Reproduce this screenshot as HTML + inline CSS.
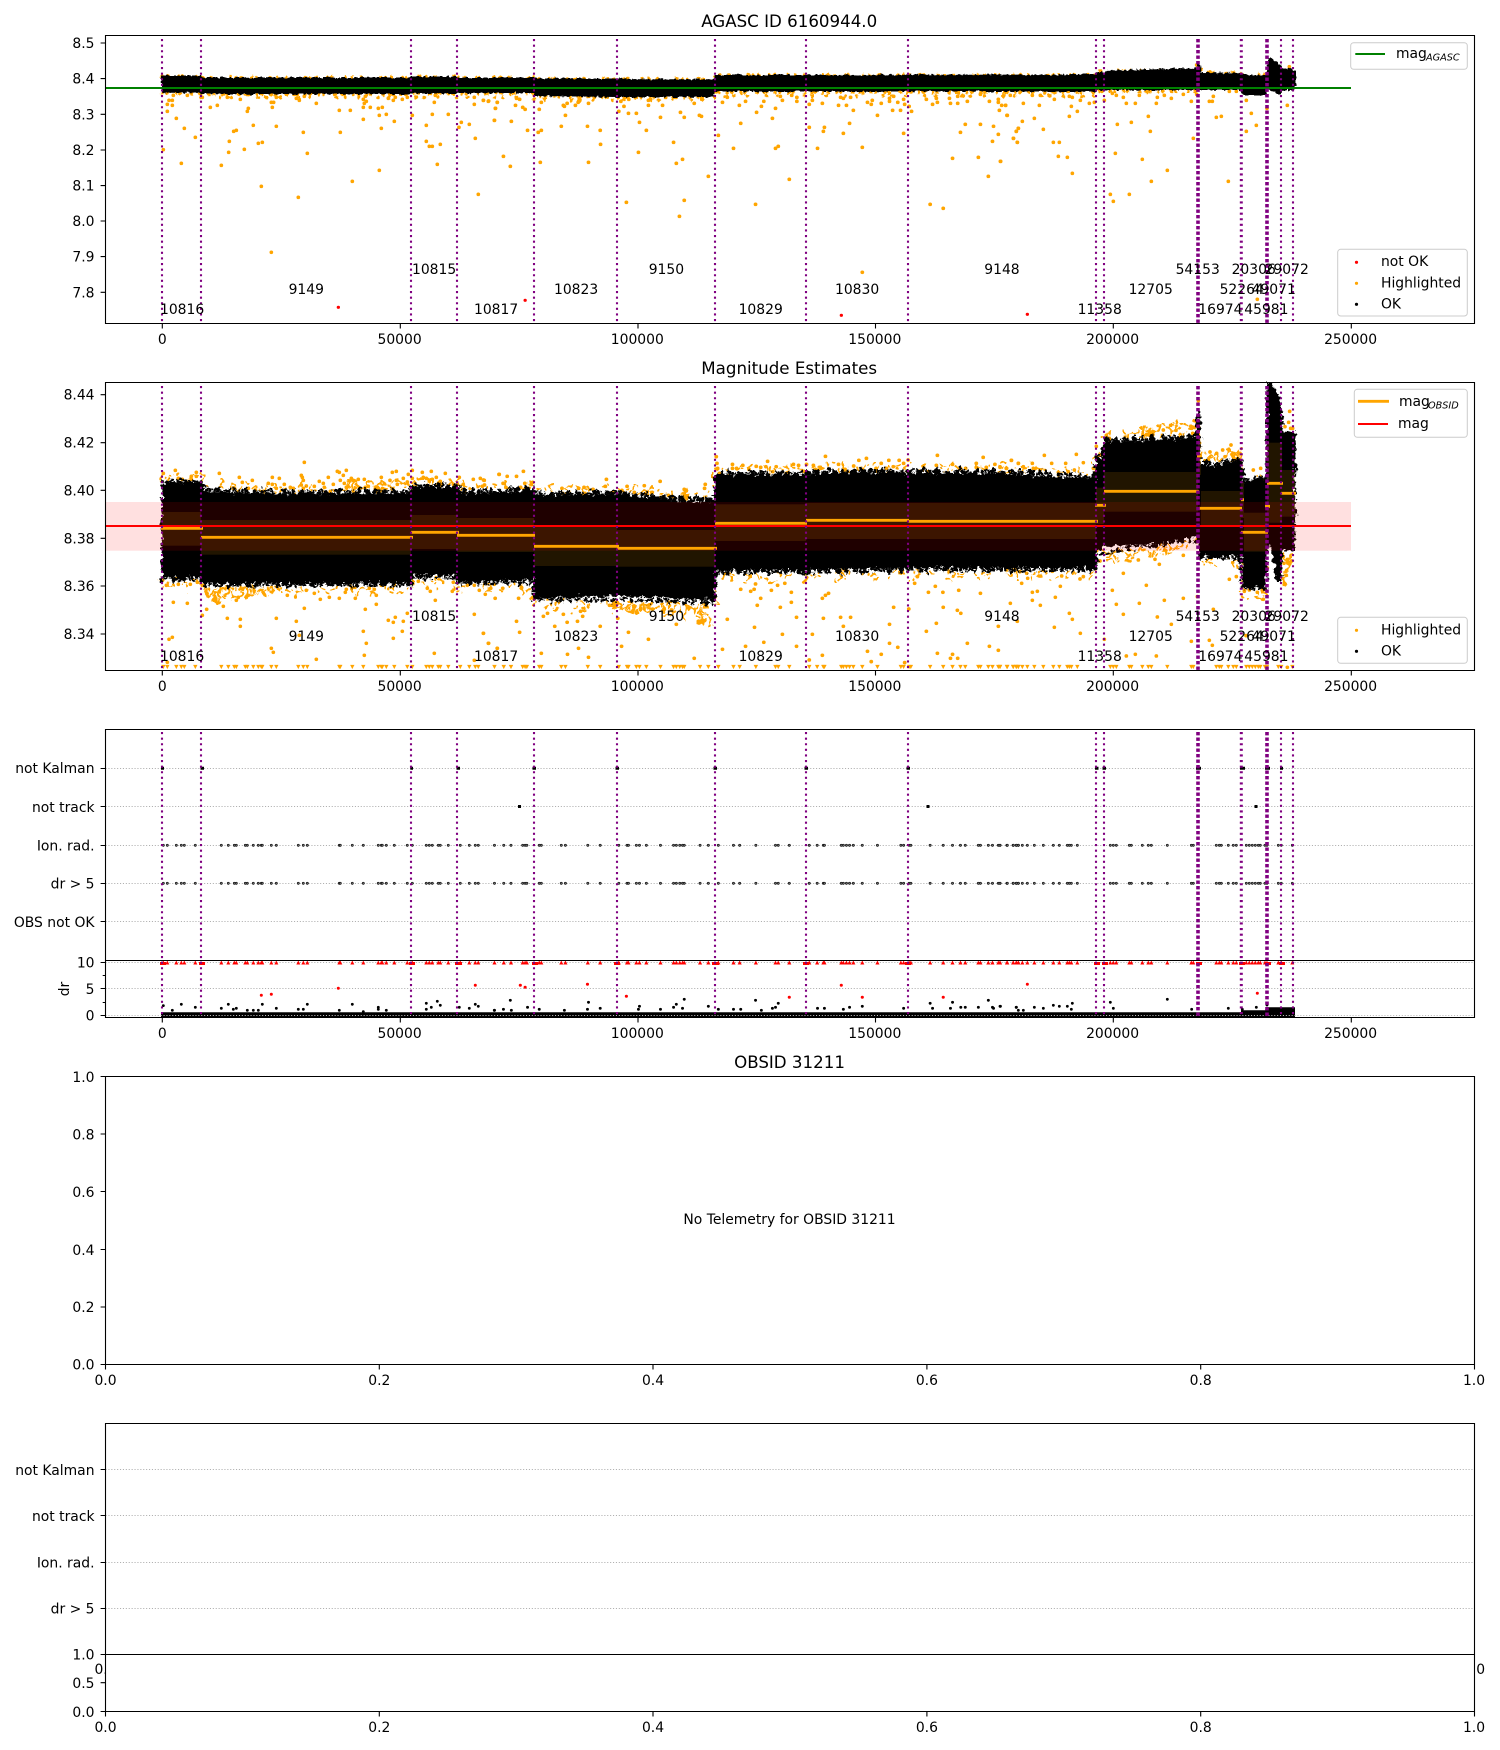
<!DOCTYPE html>
<html><head><meta charset="utf-8"><title>AGASC ID 6160944.0</title>
<style>
html,body{margin:0;padding:0;background:#fff}
svg{display:block}
text{font-family:"DejaVu Sans","Liberation Sans",sans-serif;font-size:13.9px;fill:#000}
.r{text-anchor:end}.m{text-anchor:middle}.t{font-size:16.67px;text-anchor:middle}
.s{font-size:9.7px;font-style:italic}
.o{fill:none;stroke:#ffa500;stroke-width:11;stroke-linecap:round}
.od{fill:none;stroke:#ffa500;stroke-width:3.4;stroke-linecap:round}
.k{fill:none;stroke:#000;stroke-width:3.5;stroke-linecap:round}
.kk{fill:none;stroke:#000;stroke-width:8.5;stroke-linecap:round}
.rd{fill:none;stroke:#f00;stroke-width:9;stroke-linecap:round}
.v{stroke:#800080;stroke-width:2.1;stroke-dasharray:2.1 3.5;fill:none}
.vb{stroke:#800080;stroke-width:3.6;stroke-dasharray:3.4 2.1;fill:none}
.g{stroke:#b0b0b0;stroke-width:1;stroke-dasharray:1.1 1.8;fill:none}
.a{stroke:#000;stroke-width:1.1;fill:none}
.lg{fill:#fff;fill-opacity:.8;stroke:#ccc;stroke-width:1}
.b{fill:#ffa500;fill-opacity:.13}
.ml{stroke:#ffa500;stroke-width:2.8;fill:none}
</style></head><body>
<svg width="1500" height="1750" viewBox="0 0 1500 1750" xmlns="http://www.w3.org/2000/svg">
<defs>
<filter id="j1" filterUnits="userSpaceOnUse" x="100" y="30" width="1300" height="120" color-interpolation-filters="sRGB"><feTurbulence type="fractalNoise" baseFrequency=".3" numOctaves="2" seed="3" result="n"/><feDisplacementMap in="SourceGraphic" in2="n" scale="4" xChannelSelector="R" yChannelSelector="G"/></filter>
<filter id="j2" filterUnits="userSpaceOnUse" x="100" y="375" width="1300" height="300" color-interpolation-filters="sRGB"><feTurbulence type="fractalNoise" baseFrequency=".22" numOctaves="3" seed="7" result="n"/><feDisplacementMap in="SourceGraphic" in2="n" scale="9" xChannelSelector="R" yChannelSelector="G"/></filter>
<filter id="j3" filterUnits="userSpaceOnUse" x="100" y="375" width="1300" height="300" color-interpolation-filters="sRGB"><feTurbulence type="fractalNoise" baseFrequency=".12" numOctaves="2" seed="11" result="n"/><feDisplacementMap in="SourceGraphic" in2="n" scale="16" xChannelSelector="R" yChannelSelector="G"/></filter>
<marker id="mt" markerUnits="userSpaceOnUse" markerWidth="20" markerHeight="20" refX="10" refY="10" viewBox="0 0 20 20"><path d="M3.500 3.500h13l-6.500 13z" fill="#ffa500"/></marker>
<marker id="mu" markerUnits="userSpaceOnUse" markerWidth="20" markerHeight="20" refX="10" refY="10" viewBox="0 0 20 20"><path d="M10 4l6 12h-12z" fill="#f00"/></marker>
<marker id="md" markerUnits="userSpaceOnUse" markerWidth="20" markerHeight="20" refX="10" refY="10" viewBox="0 0 20 20"><circle cx="10" cy="10" r="3.200" fill="#777" stroke="#111" stroke-width="2"/></marker>
<g id="xs" fill="none" stroke="none">
<path transform="scale(.3333)" d="M490 0 502 0 529 0 544 0 553 0 586 0 664 0 685 0 703 0 709 0 736 0 742 0 760 0 775 0 784 0 787 0 814 0 829 0 895 0 910 0 922 0 1018 0 1021 0 1057 0 1090 0 1135 0 1144 0 1147 0 1159 0 1183 0 1222 0 1237 0 1279 0 1288 0 1297 0 1315 0 1321 0 1345 0 1381 0 1408 0 1426 0 1435 0"/>
<path transform="translate(480,0) scale(.3444,.3333)" d="M42 0 69 0 90 0 124 0 131 0 136 0 172 0 178 0 236 0 248 0 313 0 349 0 403 0 427 0 431 0 454 0 463 0 483 0 524 0 562 0 570 0 580 0 588 0 593 0 639 0 663 0 692 0 736 0 754 0 801 0 858 0 866 0 898 0 956 0 979 0 997 0 1000 0 1049 0 1055 0 1064 0 1073 0 1084 0 1110 0 1154 0 1222 0 1230 0 1246 0 1251 0 1307 0 1345 0 1372 0 1395 0 1409 0 1447 0 1453 0 1476 0 1488 0 1505 0 1510 0 1530 0 1548 0 1557 0 1563 0"/>
<path transform="translate(1000,0) scale(.3333)" d="M0 0 22 0 40 0 49 0 55 0 67 0 82 0 103 0 130 0 160 0 178 0 202 0 208 0 214 0 232 0 331 0 340 0 349 0 388 0 394 0 427 0 445 0 454 0 502 0 574 0 580 0 649 0 658 0 664 0 685 0 700 0 709 0 739 0 748 0 757 0 766 0 775 0 781 0 795 0 801 0 835 0 844 0 877 0"/>
</g>
<path id="p2t" d="M162 483L201 482 204 492H220L300 494 411 492 413 487H457L460 494 534 490 536 495 617 494 700 502 715 500 716 475H806L820 473H1000L1096 478V458H1104V442L1150 440 1195 438 1198 425 1200 465H1215L1241 461 1243 482 1266 480"/>
<path id="p2b" d="M162 577H201V583H411V575H457V581H534V598H617L714 600 716 570H806L908 568H1096V553H1104L1130 545 1160 543 1197 536 1201 556H1241L1243 587H1267"/>
</defs>

<!-- PANEL 1 -->
<text class="t" x="789.200" y="27">AGASC ID 6160944.0</text>
<g filter="url(#j1)">
<g class="od" stroke-dasharray="0 6 0 11 0 4 0 14 0 7 0 9 0 19 0 5"><path d="M162 76H201V77.500H411V76.500H457V77.500H534V78.500H617V79H715V75H1096V71H1198V68H1201V73H1241V75H1267"/></g>
<g class="od" stroke-dasharray="0 5 0 9 0 4 0 12 0 7 0 3 0 8"><path d="M162 93.500H201V94.500H411V93.500H457V93.500H534V97H617V97.500H715V92.500H1096V91.500H1198"/></g>
<g class="od" stroke-dasharray="0 19 0 11 0 27 0 8 0 14"><path d="M201 97.500H534V100H715V96H1096V95"/></g>
</g>
<g class="o" transform="scale(.3333)"><path d="M490 449h.1M502 334h.1M502 313h.1M507 301h.1M517 301h.1M517 316h.1M520 286h.1M529 355h.1M553 385h.1M544 490h.1M586 412h.1M562 286h.1M607 292h.1M631 322h.1M652 316h.1M664 496h.1M682 292h.1M686 457h.1M688 424h.1M701 394h.1M709 391h.1M721 298h.1M733 448h.1M742 334h.1M745 325h.1M760 376h.1M775 430h.1M787 427h.1M784 559h.1M814 307h.1M821 307h.1M817 322h.1M829 292h.1M829 379h.1M814 757h.1M889 295h.1M898 301h.1M895 592h.1M910 397h.1M913 289h.1M922 460h.1M949 310h.1M1018 331h.1M1021 397h.1M1051 331h.1M1057 544h.1M1090 298h.1M1093 310h.1M1099 304h.1M1096 289h.1M1090 322h.1M1111 322h.1M1090 358h.1M1135 325h.1M1147 322h.1M1138 346h.1M1159 343h.1M1144 385h.1M1138 511h.1M1165 295h.1M1180 301h.1M1186 292h.1M1183 364h.1M1207 298h.1M1222 292h.1M1237 346h.1M1279 376h.1M1279 424h.1M1288 439h.1M1297 439h.1M1297 343h.1M1303 307h.1M1306 286h.1M1321 433h.1M1312 493h.1M1345 343h.1M1377 382h.1M1384 367h.1M1408 373h.1M1423 292h.1M1423 313h.1M1426 415h.1M1435 583h.1M1450 301h.1M1465 304h.1M1486 325h.1M1492 307h.1M1483 361h.1"/></g>
<g class="o" transform="translate(480,20) scale(.3444,.3333)"><path d="M10 241h.1M25 243h.1M50 247h.1M45 265h.1M42 301h.1M68 409h.1M88 439h.1M91 304h.1M103 256h.1M106 235h.1M115 238h.1M124 262h.1M131 268h.1M138 331h.1M169 337h.1M178 331h.1M175 427h.1M172 268h.1M178 247h.1M248 286h.1M242 256h.1M245 259h.1M253 250h.1M236 319h.1M277 256h.1M285 247h.1M315 250h.1M312 319h.1M315 427h.1M349 331h.1M350 373h.1M409 244h.1M403 274h.1M418 259h.1M431 280h.1M432 238h.1M454 280h.1M463 307h.1M483 331h.1M460 397h.1M425 547h.1M489 241h.1M489 256h.1M524 292h.1M530 256h.1M562 367h.1M570 430h.1M588 418h.1M582 277h.1M593 292h.1M593 541h.1M579 589h.1M622 250h.1M637 286h.1M643 289h.1M663 469h.1M692 346h.1M704 247h.1M718 232h.1M736 385h.1M757 310h.1M753 256h.1M771 244h.1M800 553h.1M803 277h.1M817 259h.1M824 244h.1M849 295h.1M858 265h.1M858 385h.1M866 379h.1M872 229h.1M878 241h.1M898 478h.1M905 226h.1M920 244h.1M920 232h.1M956 322h.1M956 253h.1M965 241h.1M980 385h.1M994 250h.1M997 334h.1M1000 322h.1M1041 256h.1M1047 232h.1M1055 235h.1M1055 340h.1M1064 256h.1M1073 310h.1M1076 232h.1M1084 271h.1M1110 382h.1M1110 757h.1M1125 247h.1M1136 253h.1M1139 241h.1M1154 286h.1M1165 250h.1M1189 235h.1M1189 244h.1M1198 271h.1M1201 229h.1M1213 247h.1M1221 271h.1M1230 238h.1M1230 340h.1M1233 253h.1M1246 259h.1M1253 274h.1M1296 238h.1M1314 253h.1M1325 235h.1M1328 247h.1M1366 250h.1M1363 235h.1M1387 229h.1M1387 250h.1M1395 337h.1M1409 313h.1M1415 244h.1M1372 415h.1M1307 553h.1M1345 565h.1M1453 313h.1M1453 223h.1M1447 412h.1M1476 469h.1M1479 244h.1M1488 364h.1M1491 319h.1M1505 238h.1M1505 247h.1M1505 343h.1M1508 271h.1M1511 424h.1M1526 256h.1M1530 286h.1M1549 355h.1M1557 334h.1M1563 325h.1M1560 367h.1"/></g>
<g class="o" transform="translate(1000,0) scale(.3333)"><path d="M5 316h.1M17 316h.1M22 346h.1M31 286h.1M40 415h.1M49 394h.1M55 385h.1M52 427h.1M67 364h.1M70 310h.1M2 484h.1M97 286h.1M103 355h.1M118 316h.1M121 286h.1M130 388h.1M160 427h.1M163 298h.1M178 427h.1M175 469h.1M202 472h.1M217 520h.1M208 349h.1M214 319h.1M208 289h.1M217 292h.1M232 334h.1M241 301h.1M268 310h.1M283 307h.1M313 301h.1M337 280h.1M349 286h.1M370 292h.1M379 310h.1M406 310h.1M418 286h.1M331 583h.1M340 604h.1M388 583h.1M346 460h.1M352 373h.1M394 367h.1M427 478h.1M445 349h.1M451 394h.1M454 544h.1M469 310h.1M472 292h.1M493 286h.1M502 511h.1M514 295h.1M550 283h.1M574 304h.1M580 415h.1M590 283h.1M628 304h.1M637 304h.1M640 289h.1M649 352h.1M664 349h.1M685 544h.1M739 301h.1M739 394h.1M754 340h.1M769 376h.1M772 898h.1M801 325h.1M862 316h.1M688 274h.1M709 274h.1M868 200h.1M630 216h.1M590 195h.1"/></g>
<path filter="url(#j1)" fill="#000" d="M161 75.500L201 75.500V77.500H411V76.500H457V77.500H534V78.500H617L640 79.300H715V75H806L1096 74.500V72H1104V70.500L1198 68.300V64L1200 64 1201 72.500 1241 73 1243 75 1266 75 1269 57.500 1275 60 1281 65.500 1283 69 1290 68 1296 72 1296 84 1294 90H1283L1281 94H1277L1271 90H1267V95H1243L1241 90H1096V91.500H1035L715 91.500 714 97H617L534 96V93H457V93.500H411V94H201V92.700H161z"/>
<path d="M105.500 88H1351" stroke="#008000" stroke-width="2.100" fill="none"/>
<path d="M338.300 307.300h.1M525.100 300.300h.1M841.300 315.300h.1M1027.300 314.300h.1" stroke="#f00" stroke-width="3.200" stroke-linecap="round" fill="none"/>
<g class="v"><path d="M162 39V323M201 39V323M411 39V323M457 39V323M534 39V323M617 39V323M715 39V323M806 39V323M908 39V323M1096 39V323M1104 39V323M1281 39V323M1293 39V323"/></g>
<g class="vb"><path d="M1198 39V323M1267 39V323"/></g><path d="M1241.300 39V323" class="v" style="stroke-width:3"/>
<g>
<text x="160" y="314">10816</text><text x="474" y="314">10817</text><text x="738.600" y="314">10829</text><text x="1077.600" y="314">11358</text><text x="1198.300" y="314">16974</text><text x="1244.300" y="314">45981</text>
<text x="288.600" y="294">9149</text><text x="554" y="294">10823</text><text x="835" y="294">10830</text><text x="1128.600" y="294">12705</text><text x="1219.600" y="294">52264</text><text x="1251.600" y="294">49071</text>
<text x="412" y="274">10815</text><text x="648.700" y="274">9150</text><text x="984.300" y="274">9148</text><text x="1175.600" y="274">54153</text><text x="1231.600" y="274">20306</text><text x="1264.600" y="274">29072</text>
</g>
<path class="a" d="M105.500 35.500H1474.500V323.500H105.500ZM100.600 43H105.500M100.600 78.600H105.500M100.600 114.300H105.500M100.600 150H105.500M100.600 185.600H105.500M100.600 221H105.500M100.600 256.600H105.500M100.600 292.300H105.500M162.300 323.500V328.500M400.300 323.500V328.500M638 323.500V328.500M875.500 323.500V328.500M1113.300 323.500V328.500M1351.300 323.500V328.500"/>
<text class="r" x="94.500" y="48">8.5</text><text class="r" x="94.500" y="83.600">8.4</text><text class="r" x="94.500" y="119.300">8.3</text><text class="r" x="94.500" y="155">8.2</text><text class="r" x="94.500" y="190.600">8.1</text><text class="r" x="94.500" y="226">8.0</text><text class="r" x="94.500" y="261.600">7.9</text><text class="r" x="94.500" y="297.300">7.8</text>
<text class="m" x="162.300" y="344">0</text><text class="m" x="399.600" y="344">50000</text><text class="m" x="637.300" y="344">100000</text><text class="m" x="874.800" y="344">150000</text><text class="m" x="1112.600" y="344">200000</text><text class="m" x="1350.600" y="344">250000</text>
<rect class="lg" x="1350.700" y="42.700" width="116.600" height="26.600" rx="3"/>
<path d="M1355.300 54H1385" stroke="#008000" stroke-width="2.100"/>
<text x="1396" y="58">mag</text><text class="s" x="1426" y="60.500">AGASC</text>
<rect class="lg" x="1337.700" y="249.300" width="129.600" height="66.700" rx="3"/>
<circle cx="1356.500" cy="262.300" r="1.600" fill="#f00"/><text x="1381" y="266">not OK</text>
<circle cx="1356.500" cy="283.300" r="1.600" fill="#ffa500"/><text x="1381" y="287.700">Highlighted</text>
<circle cx="1356.500" cy="304.300" r="1.600" fill="#000"/><text x="1381" y="308.500">OK</text>

<!-- PANEL 2 -->
<text class="t" x="789.200" y="374">Magnitude Estimates</text>
<g class="od" filter="url(#j3)"><use href="#p2t" y="-4" stroke-dasharray="0 7 0 13 0 4 0 17 0 8 0 11"/><use href="#p2t" y="-8" stroke-dasharray="0 15 0 19 0 7 0 27 0 11"/><use href="#p2b" y="5" stroke-dasharray="0 6 0 4 0 14 0 8 0 5 0 20"/><use href="#p2b" y="10" stroke-dasharray="0 19 0 8 0 33 0 12"/>
<path stroke-dasharray="0 3 0 4 0 2 0 5" d="M204 586 208 596 212 588 216 602 220 589 225 598 230 587 236 600 242 588 248 597 255 587 262 595 270 587 280 593M616 603 622 612 628 603 636 614 644 604 652 611 660 603 668 615 676 604 684 618 692 605 700 624 706 606 712 628M1104 551 1112 558 1120 549 1130 560 1140 548 1150 556 1160 546 1170 553 1180 544M1209 462 1215 452 1222 460 1228 450 1234 458 1241 448M1283 554 1287 566 1291 556 1285 575 1284 585"/>
<path stroke-dasharray="0 4 0 3 0 6 0 2" d="M345 489 352 481 360 488 368 482 376 489 384 480 392 488 400 479 408 487M1130 436 1140 428 1150 435 1160 424 1170 432 1180 421 1190 428 1197 418"/></g>
<g class="o" transform="translate(0,350) scale(.3333)"><path d="M490 370h.1M526 361h.1M535 385h.1M547 388h.1M574 388h.1M574 379h.1M589 367h.1M589 379h.1M658 370h.1M718 382h.1M727 397h.1M757 391h.1M745 415h.1M766 420h.1M790 424h.1M805 400h.1M817 382h.1M817 403h.1M838 385h.1M829 415h.1M853 403h.1M871 412h.1M880 415h.1M904 376h.1M907 382h.1M913 337h.1M910 391h.1M904 405h.1M910 415h.1M919 408h.1M943 409h.1M958 394h.1M970 400h.1M973 412h.1M985 382h.1M991 424h.1M1000 403h.1M1012 364h.1M1018 367h.1M1021 391h.1M1030 376h.1M1039 361h.1M1033 400h.1M1039 412h.1M1054 385h.1M1060 391h.1M1075 388h.1M1093 388h.1M1096 412h.1M1105 409h.1M1144 382h.1M1135 415h.1M1170 391h.1M1177 367h.1M1189 364h.1M1189 391h.1M1192 403h.1M1210 385h.1M1225 373h.1M1222 396h.1M1237 361h.1M1237 385h.1M1267 367h.1M1270 382h.1M1279 385h.1M1294 364h.1M1297 388h.1M1309 382h.1M1336 370h.1M1321 394h.1M1360 403h.1M1378 382h.1M1390 403h.1M1420 388h.1M1441 385h.1M1453 391h.1M1447 409h.1M1498 373h.1M499 706h.1M529 685h.1M535 703h.1M571 703h.1M592 697h.1M607 706h.1M620 778h.1M607 796h.1M520 757h.1M562 760h.1M507 868h.1M517 862h.1M502 937h.1M670 769h.1M682 805h.1M709 751h.1M715 742h.1M721 808h.1M721 829h.1M745 736h.1M829 805h.1M814 895h.1M820 907h.1M889 814h.1M898 856h.1M913 775h.1M949 928h.1M862 736h.1M919 721h.1M943 730h.1M961 748h.1M988 742h.1M1018 745h.1M1036 727h.1M1039 718h.1M1066 745h.1M1096 778h.1M1099 880h.1M1090 844h.1M1093 916h.1M1108 715h.1M1123 718h.1M1129 736h.1M1129 763h.1M1144 706h.1M1165 811h.1M1180 817h.1M1186 802h.1M1207 844h.1M1180 865h.1M1222 790h.1M1210 814h.1M1237 697h.1M1255 694h.1M1282 715h.1M1291 724h.1M1306 751h.1M1303 910h.1M1357 724h.1M1360 697h.1M1423 793h.1M1450 850h.1M1465 880h.1M1492 895h.1M1423 931h.1M1402 706h.1M1423 706h.1M1438 721h.1M1456 733h.1M1483 703h.1"/></g>
<g class="o" transform="translate(480,360) scale(.3444,.3333)"><path d="M10 360h.1M13 375h.1M55 343h.1M79 349h.1M106 349h.1M126 334h.1M153 367h.1M130 370h.1M118 382h.1M67 370h.1M75 382h.1M208 404h.1M238 385h.1M240 400h.1M286 385h.1M302 382h.1M328 388h.1M305 400h.1M367 358h.1M364 379h.1M385 397h.1M412 391h.1M427 379h.1M448 397h.1M477 377h.1M481 400h.1M500 397h.1M523 364h.1M525 412h.1M547 406h.1M593 388h.1M600 412h.1M654 373h.1M652 385h.1M686 290h.1M688 310h.1M690 325h.1M695 340h.1M733 313h.1M733 325h.1M745 325h.1M763 316h.1M781 328h.1M802 319h.1M815 322h.1M830 320h.1M835 304h.1M850 335h.1M860 320h.1M895 340h.1M910 313h.1M925 316h.1M940 334h.1M948 313h.1M968 316h.1M988 322h.1M1003 289h.1M1041 313h.1M1060 328h.1M1085 318h.1M1100 301h.1M1122 295h.1M1110 328h.1M1150 325h.1M1165 310h.1M1187 301h.1M1180 325h.1M1200 320h.1M1217 301h.1M1230 310h.1M1243 300h.1M1275 335h.1M1300 335h.1M1325 316h.1M1328 286h.1M1372 313h.1M1395 325h.1M1410 325h.1M1441 310h.1M1441 322h.1M1461 292h.1M1470 322h.1M1495 313h.1M1510 322h.1M1528 325h.1M1543 301h.1M1563 310h.1M10 820h.1M25 850h.1M50 865h.1M31 685h.1M44 715h.1M66 685h.1M112 715h.1M115 817h.1M106 784h.1M178 880h.1M184 769h.1M196 760h.1M217 799h.1M242 763h.1M253 787h.1M254 883h.1M286 865h.1M283 784h.1M298 769h.1M292 754h.1M349 799h.1M315 892h.1M376 736h.1M400 775h.1M431 817h.1M411 859h.1M489 838h.1M570 793h.1M622 895h.1M634 784h.1M704 868h.1M718 778h.1M757 688h.1M771 859h.1M786 694h.1M796 688h.1M800 672h.1M815 715h.1M805 736h.1M797 802h.1M824 847h.1M846 691h.1M864 676h.1M885 670h.1M872 742h.1M878 823h.1M904 697h.1M904 727h.1M919 772h.1M919 859h.1M956 900h.1M965 823h.1M994 715h.1M1003 706h.1M1012 700h.1M994 886h.1M997 775h.1M1047 772h.1M1076 772h.1M1055 799h.1M1125 874h.1M1136 905h.1M1165 883h.1M1189 793h.1M1189 850h.1M1201 742h.1M1213 862h.1M1245 747h.1M1233 908h.1M1262 670h.1M1270 650h.1M1302 697h.1M1325 790h.1M1322 679h.1M1296 814h.1M1328 880h.1M1344 697h.1M1345 742h.1M1372 883h.1M1366 895h.1M1387 895h.1M1390 691h.1M1386 751h.1M1396 760h.1M1415 850h.1M1453 700h.1M1479 859h.1M1505 799h.1M1505 871h.1M1560 784h.1"/></g>
<g class="o" transform="translate(1000,350) scale(.3333)"><path d="M0 350h.1M20 355h.1M34 331h.1M55 340h.1M70 350h.1M97 340h.1M100 355h.1M133 316h.1M120 360h.1M155 340h.1M175 367h.1M197 340h.1M205 365h.1M229 313h.1M223 360h.1M250 338h.1M280 355h.1M289 289h.1M303 315h.1M319 256h.1M440 253h.1M460 245h.1M490 240h.1M512 226h.1M528 241h.1M540 262h.1M575 235h.1M578 250h.1M595 152h.1M630 306h.1M625 330h.1M650 310h.1M668 300h.1M693 285h.1M675 320h.1M700 320h.1M720 310h.1M760 360h.1M782 355h.1M869 184h.1M855 230h.1M872 235h.1M878 235h.1M866 217h.1M20 660h.1M60 665h.1M80 670h.1M83 685h.1M65 700h.1M97 727h.1M112 724h.1M97 751h.1M121 766h.1M31 760h.1M157 664h.1M185 678h.1M181 709h.1M166 742h.1M208 790h.1M217 808h.1M241 850h.1M163 832h.1M240 687h.1M250 680h.1M290 602h.1M300 633h.1M337 721h.1M313 868h.1M349 763h.1M370 793h.1M370 670h.1M379 918h.1M406 913h.1M418 760h.1M415 630h.1M439 706h.1M469 918h.1M472 801h.1M465 628h.1M478 643h.1M493 751h.1M514 823h.1M550 745h.1M550 616h.1M574 874h.1M592 740h.1M628 871h.1M637 886h.1M640 778h.1M688 688h.1M709 680h.1M733 724h.1M748 720h.1M772 727h.1M790 748h.1M738 857h.1M795 718h.1M802 654h.1M850 620h.1M852 640h.1M859 676h.1M875 633h.1M862 952h.1"/></g>
<use href="#xs" y="667" marker-start="url(#mt)" marker-mid="url(#mt)" marker-end="url(#mt)"/>
<g filter="url(#j2)">
<path fill="#000" d="M162 483L201 482 204 492 300 494 411 492 413 487H457L460 494 534 490 536 495 617 494 700 502 714 500 715 475H806L820 473H1000L1060 477 1096 478V458H1104V442L1150 440 1195 438 1197 410 1200 410 1201 465 1215 465 1241 461 1243 482 1260 478 1266 480 1267 383H1271L1281 400 1283 432H1296L1295 550H1283L1281 582H1277L1270 545 1267 550V587H1243L1242 556H1200L1197 536 1160 543 1130 545 1104 547 1096 553V568H908L806 570H715L714 600 617 596 534 598V580L457 582V575H411V583H201V577H162z"/>
<g class="k"><use href="#p2t" y="-1.500" stroke-dasharray="0 5 0 3 0 8 0 2 0 6 0 4"/><use href="#p2t" y="-3" stroke-dasharray="0 9 0 13 0 5 0 19 0 7"/><use href="#p2b" y="1.500" stroke-dasharray="0 4 0 6 0 3 0 7 0 2 0 5"/><use href="#p2b" y="3" stroke-dasharray="0 11 0 7 0 15 0 5 0 23"/></g>
</g>
<rect x="105.500" y="502" width="1245.500" height="48.700" fill="#f00" fill-opacity=".12"/>
<g class="b"><rect x="162" y="512" width="39" height="33.700"/><rect x="201" y="520" width="210" height="34.700"/><rect x="411" y="515" width="46" height="34"/><rect x="457" y="518" width="77" height="34"/><rect x="534" y="526" width="83" height="40"/><rect x="617" y="530" width="98" height="36.700"/><rect x="715" y="504.300" width="91" height="36.700"/><rect x="806" y="503" width="102" height="36"/><rect x="908" y="503" width="188" height="36"/><rect x="1096" y="487.700" width="8" height="36.300"/><rect x="1104" y="472" width="94" height="39.700"/><rect x="1198" y="438" width="3" height="37"/><rect x="1201" y="491" width="40" height="36"/><rect x="1241" y="482" width="3" height="36"/><rect x="1244" y="512.700" width="23" height="39"/><rect x="1267" y="442.700" width="15" height="80"/><rect x="1282" y="470" width="13" height="46.700"/></g>
<g class="ml"><path d="M161 528.300H203M201 537.300H413M411 532.300H459M457 535.300H535M534 546.300H619M617 548.300H717M715 523.300H807M806 520.300H909M908 521.300H1098M1095 505.300H1106M1104 491.300H1199M1197 456H1202M1199 508.300H1242M1241 499.700H1244M1241 532.300H1268M1265 506.300H1270M1267 483.300H1283M1281 493.300H1296"/></g>
<path d="M105.500 526H1351" stroke="#f00" stroke-width="2.100" fill="none"/>
<g class="v"><path d="M162 386V670M201 386V670M411 386V670M457 386V670M534 386V670M617 386V670M715 386V670M806 386V670M908 386V670M1096 386V670M1104 386V670M1281 386V670M1293 386V670"/></g>
<g class="vb"><path d="M1198 386V670M1267 386V670"/></g><path d="M1241.300 386V670" class="v" style="stroke-width:3"/>
<g>
<text x="160" y="661">10816</text><text x="474" y="661">10817</text><text x="738.600" y="661">10829</text><text x="1077.600" y="661">11358</text><text x="1198.300" y="661">16974</text><text x="1244.300" y="661">45981</text>
<text x="288.600" y="641">9149</text><text x="554" y="641">10823</text><text x="835" y="641">10830</text><text x="1128.600" y="641">12705</text><text x="1219.600" y="641">52264</text><text x="1251.600" y="641">49071</text>
<text x="412" y="621">10815</text><text x="648.700" y="621">9150</text><text x="984.300" y="621">9148</text><text x="1175.600" y="621">54153</text><text x="1231.600" y="621">20306</text><text x="1264.600" y="621">29072</text>
</g>
<path class="a" d="M105.500 382.500H1474.500V670.500H105.500ZM100.600 394.700H105.500M100.600 442.700H105.500M100.600 490.300H105.500M100.600 538.300H105.500M100.600 586H105.500M100.600 634H105.500M162.300 670.500V675.500M400.300 670.500V675.500M638 670.500V675.500M875.500 670.500V675.500M1113.300 670.500V675.500M1351.300 670.500V675.500"/>
<text class="r" x="94.500" y="399.700">8.44</text><text class="r" x="94.500" y="447.700">8.42</text><text class="r" x="94.500" y="495.300">8.40</text><text class="r" x="94.500" y="543.300">8.38</text><text class="r" x="94.500" y="591">8.36</text><text class="r" x="94.500" y="639">8.34</text>
<text class="m" x="162.300" y="691">0</text><text class="m" x="399.600" y="691">50000</text><text class="m" x="637.300" y="691">100000</text><text class="m" x="874.800" y="691">150000</text><text class="m" x="1112.600" y="691">200000</text><text class="m" x="1350.600" y="691">250000</text>
<rect class="lg" x="1354.300" y="389.300" width="113" height="48" rx="3"/>
<path d="M1358 401.300H1389" stroke="#ffa500" stroke-width="2.800"/><text x="1399" y="406">mag</text><text class="s" x="1428" y="408.500">OBSID</text>
<path d="M1358 424H1388" stroke="#f00" stroke-width="2.100"/><text x="1398" y="428">mag</text>
<rect class="lg" x="1337.700" y="617.300" width="129.600" height="46" rx="3"/>
<circle cx="1356.500" cy="630.300" r="1.600" fill="#ffa500"/><text x="1381" y="634.700">Highlighted</text>
<circle cx="1356.500" cy="651.300" r="1.600" fill="#000"/><text x="1381" y="655.500">OK</text>

<!-- PANEL 3 -->
<path class="g" d="M105.500 768.500H1474M105.500 806.500H1474M105.500 845.500H1474M105.500 883.500H1474M105.500 921.500H1474M105.500 962.500H1474M105.500 988.500H1474"/>
<use href="#xs" y="845.300" marker-start="url(#md)" marker-mid="url(#md)" marker-end="url(#md)"/>
<use href="#xs" y="883.300" marker-start="url(#md)" marker-mid="url(#md)" marker-end="url(#md)"/>
<use href="#xs" y="962.500" marker-start="url(#mu)" marker-mid="url(#mu)" marker-end="url(#mu)"/>
<path d="M160 963.500H166M199 963.500H205M409 963.500H415M455 963.500H462M532 963.500H538M614 963.500H620M712 963.500H719M803 963.500H809M905 963.500H911M1094 963.500H1100M1102 963.500H1108M1196 963.500H1202M1239 963.500H1245M1265 963.500H1271M1279 963.500H1285" stroke="#f00" stroke-width="3" fill="none"/>
<path d="M161 768.300H164M200.500 768.300H204M410.300 768.300H413M456.500 768.300H460M532.500 768.300H536M615.500 768.300H619M713.500 768.300H717M804.500 768.300H808M906.500 768.300H910M1095 768.300H1098.500M1102.500 768.300H1106M1196 768.300H1201M1240 768.300H1245M1265 768.300H1270M1280 768.300H1283M518 806.500H521M926.500 806.500H929.500M1254.500 806.500H1257.500" stroke="#000" stroke-width="3" fill="none"/>
<path fill="#000" d="M161 1012.300H1241V1010.300H1266V1007.300H1295V1017H161z"/>
<path d="M105.500 1015.500H1474" stroke="#bbb" stroke-width="1" stroke-dasharray="1.100 1.800" fill="none"/>
<g class="kk" transform="translate(0,720) scale(.3333)"><path d="M490 857h.1M517 871h.1M544 853h.1M586 862h.1M664 865h.1M685 853h.1M700 868h.1M709 865h.1M742 871h.1M760 871h.1M775 871h.1M787 853h.1M829 865h.1M895 868h.1M910 868h.1M922 853h.1M1018 871h.1M1057 853h.1M1090 875h.1M1135 868h.1M1135 862h.1M1159 871h.1M1279 850h.1M1279 868h.1M1294 862h.1M1312 844h.1M1321 856h.1M1378 862h.1M1408 865h.1M1426 853h.1M1435 859h.1M1483 871h.1"/></g>
<g class="kk" transform="translate(480,720) scale(.3444,.3333)"><path d="M42 871h.1M68 868h.1M88 841h.1M91 871h.1M138 862h.1M172 868h.1M245 871h.1M312 868h.1M315 847h.1M349 865h.1M463 859h.1M460 868h.1M524 868h.1M562 862h.1M570 853h.1M588 865h.1M593 838h.1M663 859h.1M692 868h.1M736 868h.1M757 868h.1M800 841h.1M817 871h.1M849 865h.1M858 862h.1M866 850h.1M980 865h.1M1000 865h.1M1055 868h.1M1073 862h.1M1110 859h.1M1230 865h.1M1307 850h.1M1314 865h.1M1366 865h.1M1372 847h.1M1396 862h.1M1409 862h.1M1447 862h.1M1476 841h.1M1488 862h.1M1491 865h.1M1511 859h.1M1557 862h.1"/></g>
<g class="kk" transform="translate(1000,720) scale(.3333)"><path d="M0 859h.1M49 862h.1M55 871h.1M70 871h.1M103 862h.1M130 865h.1M160 856h.1M178 859h.1M202 859h.1M217 850h.1M214 868h.1M331 847h.1M340 865h.1M502 838h.1M575 868h.1M685 865h.1M727 868h.1M769 862h.1M801 855h.1M800 870h.1"/></g>
<g class="rd" transform="translate(0,720) scale(.3333)"><path d="M784 826h.1M814 823h.1M1015 805h.1M1426 796h.1"/></g>
<g class="rd" transform="translate(480,720) scale(.3444,.3333)"><path d="M117 796h.1M131 802h.1M312 793h.1M425 829h.1M898 832h.1M1049 796h.1M1110 832h.1M1345 832h.1"/></g>
<g class="rd" transform="translate(1000,720) scale(.3333)"><path d="M82 793h.1M772 820h.1"/></g>
<g class="v"><path d="M162 732V1017M201 732V1017M411 732V1017M457 732V1017M534 732V1017M617 732V1017M715 732V1017M806 732V1017M908 732V1017M1096 732V1017M1104 732V1017M1281 732V1017M1293 732V1017"/></g>
<g class="vb"><path d="M1198 732V1017M1267 732V1017"/></g><path d="M1241.300 732V1017" class="v" style="stroke-width:3"/>
<path class="a" d="M105.500 729.500H1474.500V1017.500H105.500ZM105.500 960.500H1474.500M100.600 768.500H105.500M100.600 806.500H105.500M100.600 845.500H105.500M100.600 883.500H105.500M100.600 921.500H105.500M100.600 962.500H105.500M100.600 988.500H105.500M100.600 1015.500H105.500M102.700 975.500H105.500M102.700 1002.500H105.500M162.300 1017.500V1022.500M400.300 1017.500V1022.500M638 1017.500V1022.500M875.500 1017.500V1022.500M1113.300 1017.500V1022.500M1351.300 1017.500V1022.500"/>
<text class="r" x="94.500" y="773">not Kalman</text><text class="r" x="94.500" y="812">not track</text><text class="r" x="94.500" y="850.500">Ion. rad.</text><text class="r" x="94.500" y="888.500">dr &gt; 5</text><text class="r" x="94.500" y="927">OBS not OK</text>
<text class="r" x="94.500" y="967.700">10</text><text class="r" x="94.500" y="994">5</text><text class="r" x="94.500" y="1020.700">0</text>
<text class="m" transform="translate(69,989) rotate(-90)">dr</text>
<text class="m" x="162.300" y="1038">0</text><text class="m" x="399.600" y="1038">50000</text><text class="m" x="637.300" y="1038">100000</text><text class="m" x="874.800" y="1038">150000</text><text class="m" x="1112.600" y="1038">200000</text><text class="m" x="1350.600" y="1038">250000</text>

<!-- PANEL 4 -->
<text class="t" x="789.500" y="1068">OBSID 31211</text>
<path class="a" d="M105.500 1076.500H1474.500V1364.500H105.500ZM100.600 1076.500H105.500M100.600 1134H105.500M100.600 1191.500H105.500M100.600 1249.500H105.500M100.600 1307H105.500M100.600 1364.500H105.500M105.500 1364.500V1369.500M379.300 1364.500V1369.500M653 1364.500V1369.500M926.900 1364.500V1369.500M1200.700 1364.500V1369.500M1474.500 1364.500V1369.500"/>
<text class="r" x="94.500" y="1082">1.0</text><text class="r" x="94.500" y="1139.500">0.8</text><text class="r" x="94.500" y="1197">0.6</text><text class="r" x="94.500" y="1255">0.4</text><text class="r" x="94.500" y="1312">0.2</text><text class="r" x="94.500" y="1369.500">0.0</text>
<text class="m" x="789.500" y="1224">No Telemetry for OBSID 31211</text>
<text class="m" x="105.500" y="1385">0.0</text><text class="m" x="379.300" y="1385">0.2</text><text class="m" x="653" y="1385">0.4</text><text class="m" x="926.900" y="1385">0.6</text><text class="m" x="1200.700" y="1385">0.8</text><text class="m" x="1474" y="1385">1.0</text>

<!-- PANEL 5 -->
<path class="g" d="M105.500 1469.500H1474M105.500 1515.500H1474M105.500 1562.500H1474M105.500 1608.500H1474"/>
<text class="m" x="105.500" y="1674">0.0</text><text class="m" x="1474" y="1674">1.0</text>
<rect x="105.500" y="1654.500" width="1369" height="57" fill="#fff"/>
<path class="a" d="M105.500 1423.500H1474.500V1711.500H105.500ZM105.500 1654.500H1474.500M100.600 1469.500H105.500M100.600 1515.500H105.500M100.600 1562.500H105.500M100.600 1608.500H105.500M100.600 1654.500H105.500M100.600 1682.700H105.500M100.600 1711.500H105.500M105.500 1711.500V1716.500M379.300 1711.500V1716.500M653 1711.500V1716.500M926.900 1711.500V1716.500M1200.700 1711.500V1716.500M1474.500 1711.500V1716.500"/>
<text class="r" x="94.500" y="1475">not Kalman</text><text class="r" x="94.500" y="1521">not track</text><text class="r" x="94.500" y="1567.500">Ion. rad.</text><text class="r" x="94.500" y="1613.500">dr &gt; 5</text>
<text class="r" x="94.500" y="1659.500">1.0</text><text class="r" x="94.500" y="1688">0.5</text><text class="r" x="94.500" y="1717">0.0</text>
<text class="m" x="105.500" y="1732">0.0</text><text class="m" x="379.300" y="1732">0.2</text><text class="m" x="653" y="1732">0.4</text><text class="m" x="926.900" y="1732">0.6</text><text class="m" x="1200.700" y="1732">0.8</text><text class="m" x="1474" y="1732">1.0</text>
</svg>
</body></html>
